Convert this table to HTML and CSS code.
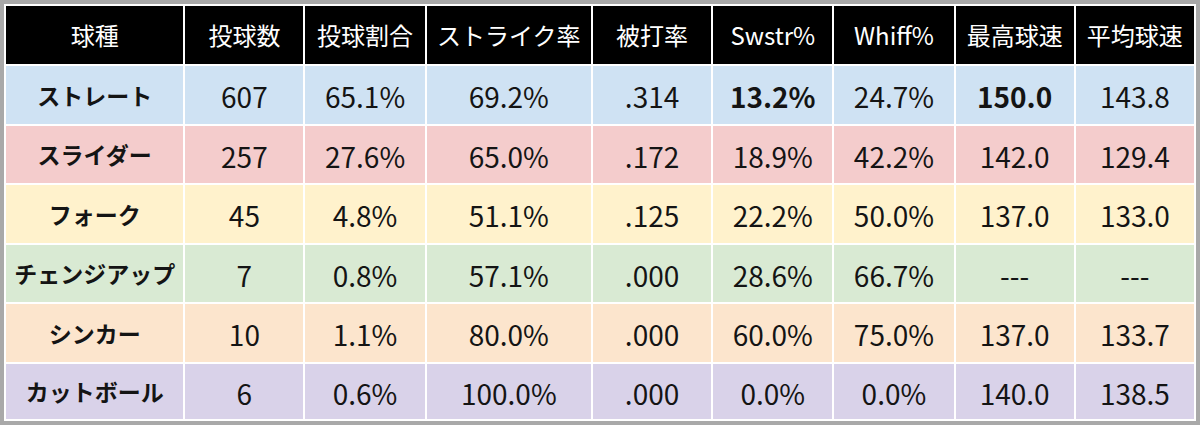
FILE: index.html
```html
<!DOCTYPE html>
<html lang="ja">
<head>
<meta charset="utf-8">
<title>球種別成績</title>
<link rel="stylesheet" href="styles.css">
</head>
<body>
<div class="frame">
<table class="stats">
<colgroup>
<col class="c-name"><col class="c-a"><col class="c-b"><col class="c-wide"><col class="c-a"><col class="c-b"><col class="c-b"><col class="c-a"><col class="c-a">
</colgroup>
<thead>
<tr>
<th>球種</th><th>投球数</th><th>投球割合</th><th>ストライク率</th><th>被打率</th><th>Swstr%</th><th>Whiff%</th><th>最高球速</th><th>平均球速</th>
</tr>
</thead>
<tbody>
<tr class="r-blue">
<td class="name">ストレート</td><td>607</td><td>65.1%</td><td>69.2%</td><td>.314</td><td class="bold">13.2%</td><td>24.7%</td><td class="bold">150.0</td><td>143.8</td>
</tr>
<tr class="r-pink">
<td class="name">スライダー</td><td>257</td><td>27.6%</td><td>65.0%</td><td>.172</td><td>18.9%</td><td>42.2%</td><td>142.0</td><td>129.4</td>
</tr>
<tr class="r-yellow">
<td class="name">フォーク</td><td>45</td><td>4.8%</td><td>51.1%</td><td>.125</td><td>22.2%</td><td>50.0%</td><td>137.0</td><td>133.0</td>
</tr>
<tr class="r-green">
<td class="name">チェンジアップ</td><td>7</td><td>0.8%</td><td>57.1%</td><td>.000</td><td>28.6%</td><td>66.7%</td><td>---</td><td>---</td>
</tr>
<tr class="r-orange">
<td class="name">シンカー</td><td>10</td><td>1.1%</td><td>80.0%</td><td>.000</td><td>60.0%</td><td>75.0%</td><td>137.0</td><td>133.7</td>
</tr>
<tr class="r-purple">
<td class="name">カットボール</td><td>6</td><td>0.6%</td><td>100.0%</td><td>.000</td><td>0.0%</td><td>0.0%</td><td>140.0</td><td>138.5</td>
</tr>
</tbody>
</table>
</div>
</body>
</html>
```
FILE: styles.css
```css
html, body {
  margin: 0;
  padding: 0;
  background: #ffffff;
}

.frame {
  width: 1192px;
  height: 417px;
  border: 4px solid #a9a9a9;
  overflow: hidden;
  background: #ffffff;
}

.stats {
  width: 1192px;
  table-layout: fixed;
  border-collapse: separate;
  border-spacing: 2px;
  background: #ffffff;
  font-family: "Noto Sans CJK JP", "Noto Sans", sans-serif;
  color: #141414;
}

.c-name { width: 177px; }
.c-a { width: 118px; }
.c-b { width: 119px; }
.c-wide { width: 164px; }

.stats th,
.stats td {
  padding: 0;
  text-align: center;
  vertical-align: middle;
  white-space: nowrap;
  overflow: hidden;
  line-height: 1;
}

.stats th {
  height: 58px;
  background: #000000;
  color: #ffffff;
  font-weight: 400;
  font-size: 24px;
}

.stats td {
  font-size: 28px;
  font-weight: 400;
  padding-top: 2px;
}

.stats tbody tr:nth-child(odd) td { height: 56px; }
.stats tbody tr:nth-child(even) td { height: 55px; }
.stats tbody tr:last-child td { height: 53px; }

.stats td.name {
  font-size: 23px;
  font-weight: 700;
  padding-top: 0;
}

.stats td.bold {
  font-weight: 700;
}

.r-blue td { background: #cfe2f3; }
.r-pink td { background: #f4cccc; }
.r-yellow td { background: #fff2cc; }
.r-green td { background: #d9ead3; }
.r-orange td { background: #fce5cd; }
.r-purple td { background: #d9d2e9; }
```
